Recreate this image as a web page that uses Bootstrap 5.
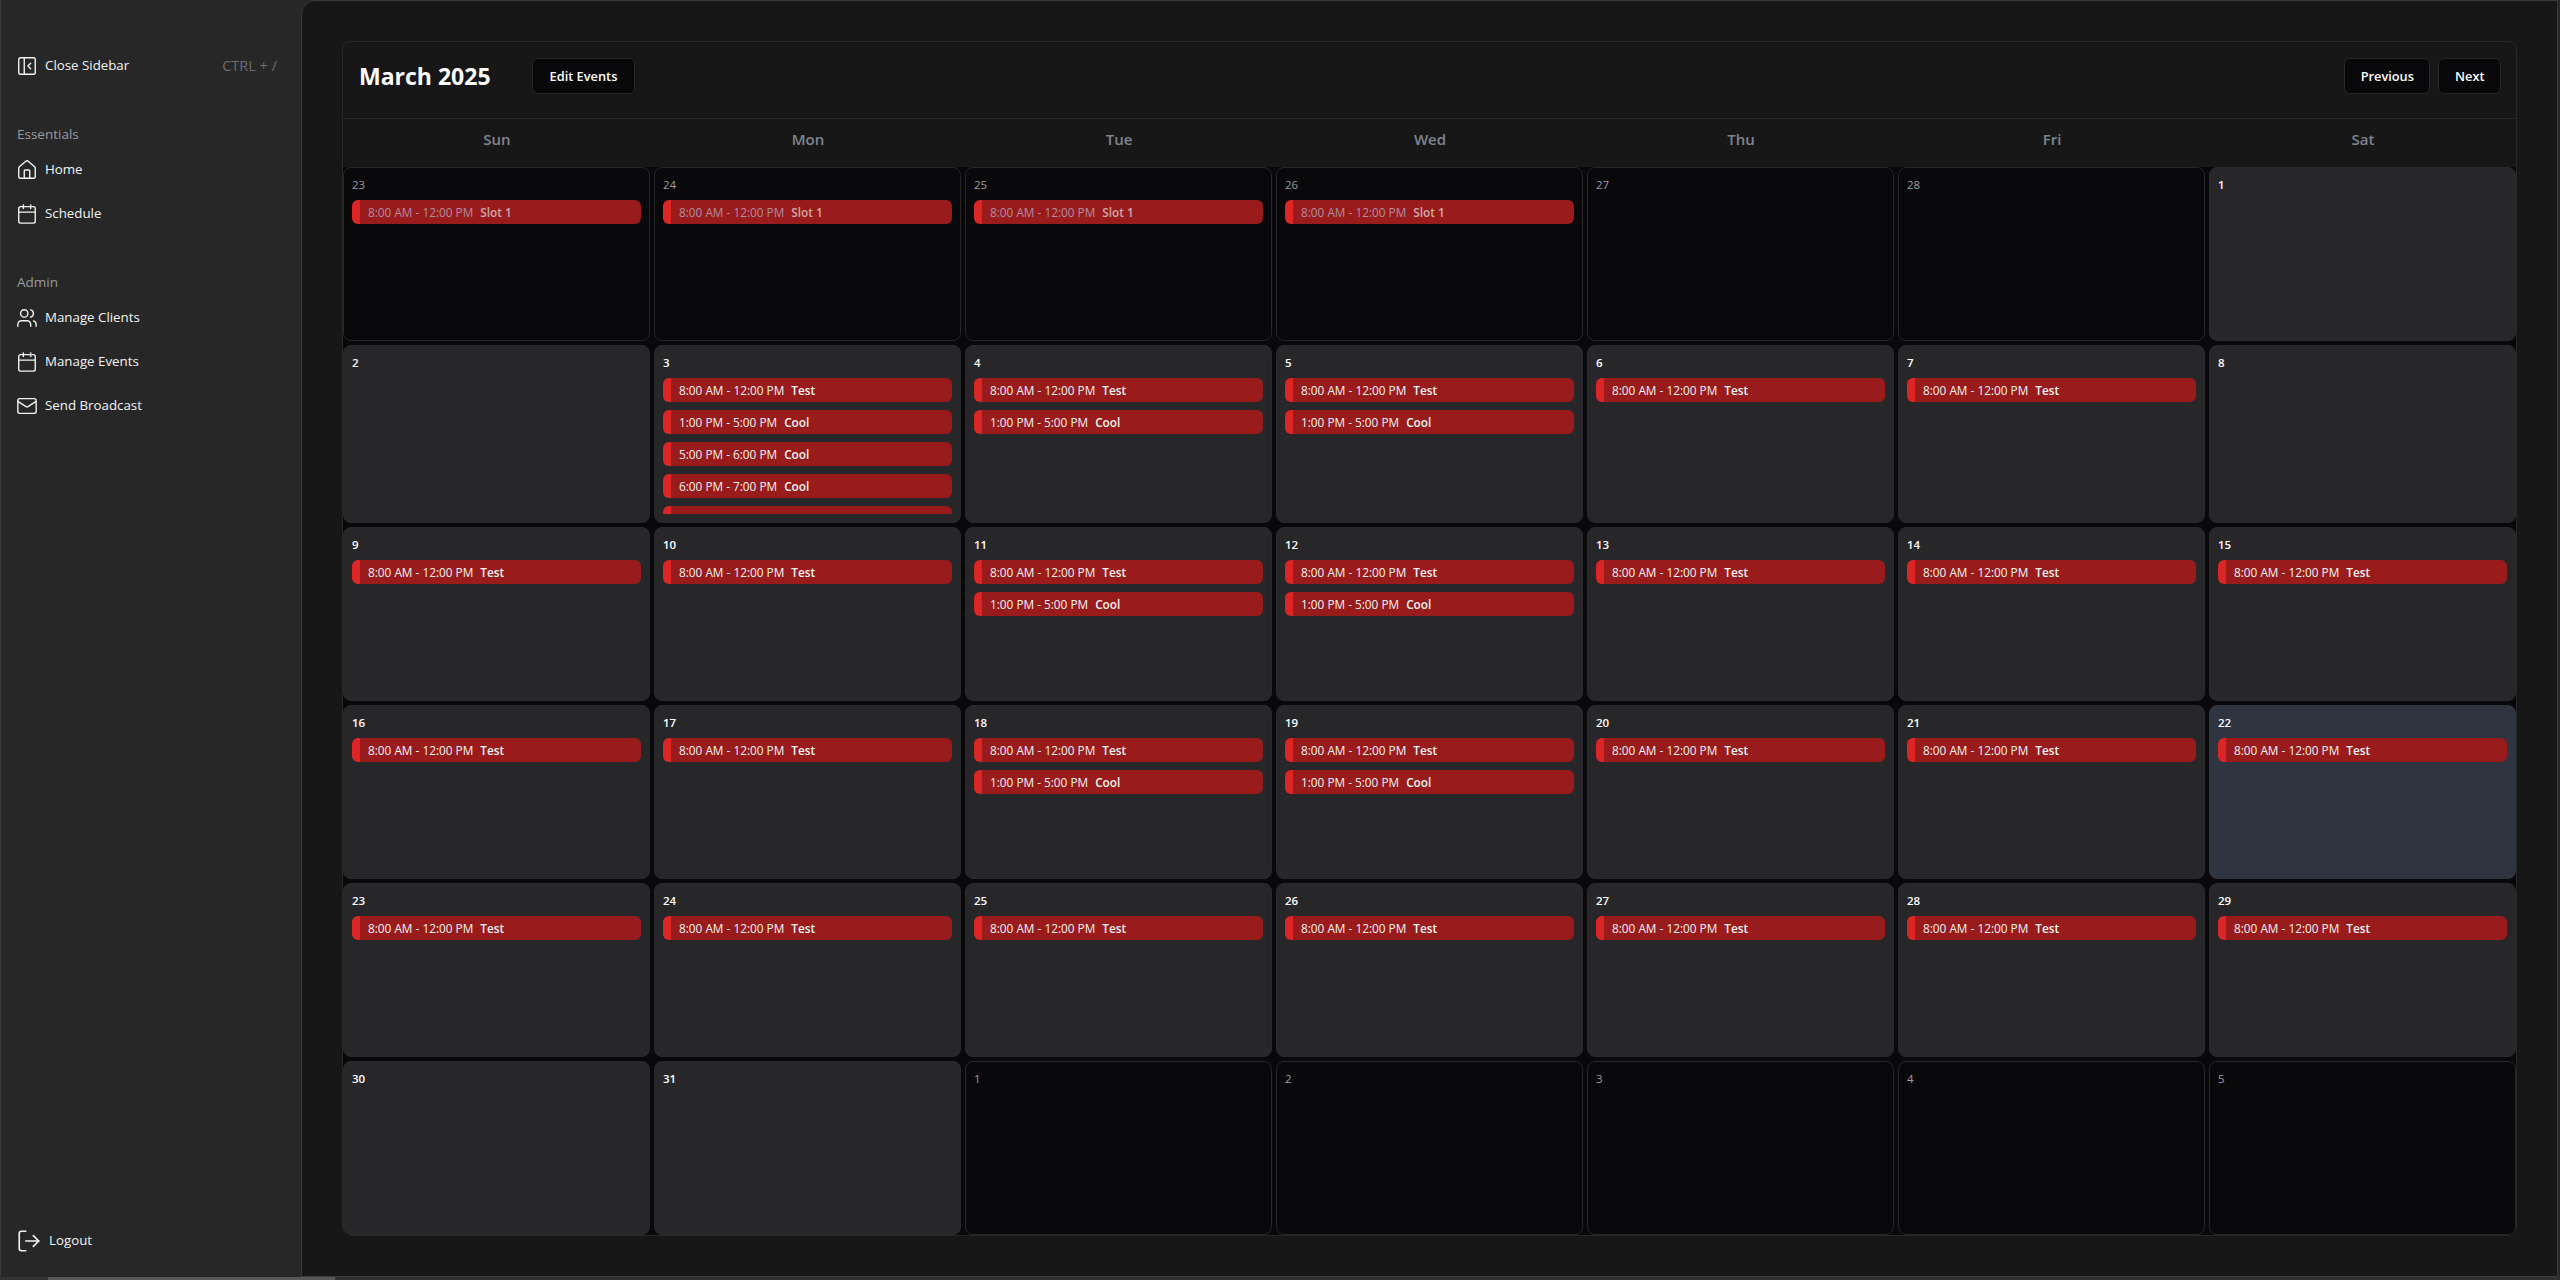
<!DOCTYPE html>
<html lang="en">
<head>
<meta charset="utf-8">
<title>March 2025</title>
<link href="https://cdn.jsdelivr.net/npm/bootstrap@5.3.0/dist/css/bootstrap.min.css" rel="stylesheet">
<style>
html,body{height:100%}
body{background:#101010;font-family:"Open Sans","Noto Sans",sans-serif;color:#fafafa;overflow:hidden}
.app-shell{height:1280px}
.app-row{flex:1;min-height:0;padding-right:2px;background:#272727}
.frame-edge{height:3px;flex:none;background:linear-gradient(90deg,#333 48px,#575757 48px,#575757 335px,#303030 335px)}
.side{width:301px;flex:none;padding:0 16px 14px 16px;background:#272727;border-left:1px solid #3a3a3a}
.side a{color:#f4f4f5;text-decoration:none}
.side-item{height:44px;font-size:13.3px;gap:7px}
.side-item svg{width:22px;height:22px;flex:none;margin-left:-1px;fill:none;stroke:#f4f4f5;stroke-width:1.5;stroke-linecap:round;stroke-linejoin:round}
.side-item.logout svg{width:26px;height:26px;margin-left:-1px}
.side-top{margin-top:44px;margin-bottom:36px}
.shortcut{font-size:14.5px;color:#6c6c75;margin-right:8px}
.side-head{font-size:13.5px;font-weight:500;color:#9a9aa0;height:20px;line-height:20px;margin-bottom:4px}
.side-group{margin-bottom:36px}
.panel{flex:1;min-width:0;background:#171717;border:1px solid #3a3a3a;border-radius:14px 0 0 0;padding:40px}
.cal{height:100%;background:#171717;border:1px solid #27272a;border-radius:8px;overflow:hidden}
.cal-top{padding:16px 15px 24px 16px;height:77px;border-bottom:1px solid #27272a}
.cal-title{font-size:23px;font-weight:700;color:#fff;margin:0 41px 0 0;line-height:36px}
.cal-btn{--bs-btn-bg:#09090b;--bs-btn-border-color:#27272a;--bs-btn-color:#fff;--bs-btn-hover-bg:#09090b;--bs-btn-hover-color:#fff;--bs-btn-hover-border-color:#27272a;--bs-btn-font-size:12.8px;--bs-btn-font-weight:600;--bs-btn-border-radius:6px;--bs-btn-padding-x:17px;height:36px;line-height:1}
.cal-btn.pager{--bs-btn-padding-x:15.5px}
.week-head{display:grid;grid-template-columns:repeat(7,1fr);column-gap:4px;height:48px}
.week-head div{font-size:15px;font-weight:600;color:#80848f;text-align:center;line-height:41px;padding-left:1px}
.days{display:grid;grid-template-columns:repeat(7,1fr);grid-template-rows:174px 178px repeat(4,174px);gap:4px;background:#09090b}
.day{background:#27272a;border:1px solid #2a2a2d;border-radius:8px;padding:8px;overflow:hidden;display:flex;flex-direction:column;min-width:0}
.day.other{background:#09090b;border-color:#27272a}
.day.today{background:#2e3440;border-color:#30343f}
.num{font-size:11.5px;font-weight:600;line-height:17px;height:16px;margin-bottom:8px;color:#fff}
.other .num{font-weight:400;color:#9d9da6}
.evts{display:flex;flex-direction:column;gap:8px;overflow:hidden;flex:1;min-height:0}
.evt{flex:none;height:24px;background:#991b1b;border-left:8px solid #dc2626;border-radius:6px;padding-left:8px;font-size:11.8px;line-height:24px;color:#f5f5f5;white-space:nowrap;overflow:hidden}
.evt b{font-weight:600;margin-left:7px}
.other .evt{color:#b08fa3}
.other .evt b{color:#cfa9a9}
</style>
</head>
<body>
<div class="app-shell d-flex flex-column">
<div class="app-row d-flex">
<aside class="side d-flex flex-column">
  <a href="#" class="side-item side-top d-flex align-items-center"><svg viewBox="0 0 24 24"><rect x="3" y="3" width="18" height="18" rx="2"/><path d="M9 3v18"/><path d="m16 15-3-3 3-3"/></svg><span class="flex-grow-1">Close Sidebar</span><span class="shortcut">CTRL + /</span></a>
  <div class="side-group">
    <div class="side-head">Essentials</div>
    <a href="#" class="side-item d-flex align-items-center"><svg viewBox="0 0 24 24"><path d="M15 21v-8a1 1 0 0 0-1-1h-4a1 1 0 0 0-1 1v8"/><path d="M3 10a2 2 0 0 1 .709-1.528l7-5.999a2 2 0 0 1 2.582 0l7 5.999A2 2 0 0 1 21 10v9a2 2 0 0 1-2 2H5a2 2 0 0 1-2-2z"/></svg><span>Home</span></a>
    <a href="#" class="side-item d-flex align-items-center"><svg viewBox="0 0 24 24"><path d="M8 2v4"/><path d="M16 2v4"/><rect x="3" y="4" width="18" height="18" rx="2"/><path d="M3 10h18"/></svg><span>Schedule</span></a>
  </div>
  <div class="side-group">
    <div class="side-head">Admin</div>
    <a href="#" class="side-item d-flex align-items-center"><svg viewBox="0 0 24 24"><path d="M16 21v-2a4 4 0 0 0-4-4H6a4 4 0 0 0-4 4v2"/><circle cx="9" cy="7" r="4"/><path d="M22 21v-2a4 4 0 0 0-3-3.87"/><path d="M16 3.13a4 4 0 0 1 0 7.75"/></svg><span>Manage Clients</span></a>
    <a href="#" class="side-item d-flex align-items-center"><svg viewBox="0 0 24 24"><path d="M8 2v4"/><path d="M16 2v4"/><rect x="3" y="4" width="18" height="18" rx="2"/><path d="M3 10h18"/></svg><span>Manage Events</span></a>
    <a href="#" class="side-item d-flex align-items-center"><svg viewBox="0 0 24 24"><rect x="2" y="4" width="20" height="16" rx="2"/><path d="m22 7-8.97 5.7a1.94 1.94 0 0 1-2.06 0L2 7"/></svg><span>Send Broadcast</span></a>
  </div>
  <a href="#" class="side-item logout mt-auto d-flex align-items-center"><svg viewBox="0 0 24 24"><path d="M9 21H5a2 2 0 0 1-2-2V5a2 2 0 0 1 2-2h4"/><path d="m16 17 5-5-5-5"/><path d="M21 12H9"/></svg><span>Logout</span></a>
</aside>
<main class="panel">
  <section class="cal">
    <header class="cal-top d-flex align-items-center">
      <h1 class="cal-title">March 2025</h1>
      <button type="button" class="btn cal-btn">Edit Events</button>
      <div class="ms-auto d-flex gap-2">
        <button type="button" class="btn cal-btn pager">Previous</button>
        <button type="button" class="btn cal-btn pager">Next</button>
      </div>
    </header>
    <div class="week-head"><div>Sun</div><div>Mon</div><div>Tue</div><div>Wed</div><div>Thu</div><div>Fri</div><div>Sat</div></div>
    <div class="days">
      <div class="day other"><div class="num">23</div><div class="evts"><div class="evt">8:00 AM - 12:00 PM<b>Slot 1</b></div></div></div>
      <div class="day other"><div class="num">24</div><div class="evts"><div class="evt">8:00 AM - 12:00 PM<b>Slot 1</b></div></div></div>
      <div class="day other"><div class="num">25</div><div class="evts"><div class="evt">8:00 AM - 12:00 PM<b>Slot 1</b></div></div></div>
      <div class="day other"><div class="num">26</div><div class="evts"><div class="evt">8:00 AM - 12:00 PM<b>Slot 1</b></div></div></div>
      <div class="day other"><div class="num">27</div></div>
      <div class="day other"><div class="num">28</div></div>
      <div class="day"><div class="num">1</div></div>

      <div class="day"><div class="num">2</div></div>
      <div class="day"><div class="num">3</div><div class="evts"><div class="evt">8:00 AM - 12:00 PM<b>Test</b></div><div class="evt">1:00 PM - 5:00 PM<b>Cool</b></div><div class="evt">5:00 PM - 6:00 PM<b>Cool</b></div><div class="evt">6:00 PM - 7:00 PM<b>Cool</b></div><div class="evt"></div></div></div>
      <div class="day"><div class="num">4</div><div class="evts"><div class="evt">8:00 AM - 12:00 PM<b>Test</b></div><div class="evt">1:00 PM - 5:00 PM<b>Cool</b></div></div></div>
      <div class="day"><div class="num">5</div><div class="evts"><div class="evt">8:00 AM - 12:00 PM<b>Test</b></div><div class="evt">1:00 PM - 5:00 PM<b>Cool</b></div></div></div>
      <div class="day"><div class="num">6</div><div class="evts"><div class="evt">8:00 AM - 12:00 PM<b>Test</b></div></div></div>
      <div class="day"><div class="num">7</div><div class="evts"><div class="evt">8:00 AM - 12:00 PM<b>Test</b></div></div></div>
      <div class="day"><div class="num">8</div></div>

      <div class="day"><div class="num">9</div><div class="evts"><div class="evt">8:00 AM - 12:00 PM<b>Test</b></div></div></div>
      <div class="day"><div class="num">10</div><div class="evts"><div class="evt">8:00 AM - 12:00 PM<b>Test</b></div></div></div>
      <div class="day"><div class="num">11</div><div class="evts"><div class="evt">8:00 AM - 12:00 PM<b>Test</b></div><div class="evt">1:00 PM - 5:00 PM<b>Cool</b></div></div></div>
      <div class="day"><div class="num">12</div><div class="evts"><div class="evt">8:00 AM - 12:00 PM<b>Test</b></div><div class="evt">1:00 PM - 5:00 PM<b>Cool</b></div></div></div>
      <div class="day"><div class="num">13</div><div class="evts"><div class="evt">8:00 AM - 12:00 PM<b>Test</b></div></div></div>
      <div class="day"><div class="num">14</div><div class="evts"><div class="evt">8:00 AM - 12:00 PM<b>Test</b></div></div></div>
      <div class="day"><div class="num">15</div><div class="evts"><div class="evt">8:00 AM - 12:00 PM<b>Test</b></div></div></div>

      <div class="day"><div class="num">16</div><div class="evts"><div class="evt">8:00 AM - 12:00 PM<b>Test</b></div></div></div>
      <div class="day"><div class="num">17</div><div class="evts"><div class="evt">8:00 AM - 12:00 PM<b>Test</b></div></div></div>
      <div class="day"><div class="num">18</div><div class="evts"><div class="evt">8:00 AM - 12:00 PM<b>Test</b></div><div class="evt">1:00 PM - 5:00 PM<b>Cool</b></div></div></div>
      <div class="day"><div class="num">19</div><div class="evts"><div class="evt">8:00 AM - 12:00 PM<b>Test</b></div><div class="evt">1:00 PM - 5:00 PM<b>Cool</b></div></div></div>
      <div class="day"><div class="num">20</div><div class="evts"><div class="evt">8:00 AM - 12:00 PM<b>Test</b></div></div></div>
      <div class="day"><div class="num">21</div><div class="evts"><div class="evt">8:00 AM - 12:00 PM<b>Test</b></div></div></div>
      <div class="day today"><div class="num">22</div><div class="evts"><div class="evt">8:00 AM - 12:00 PM<b>Test</b></div></div></div>

      <div class="day"><div class="num">23</div><div class="evts"><div class="evt">8:00 AM - 12:00 PM<b>Test</b></div></div></div>
      <div class="day"><div class="num">24</div><div class="evts"><div class="evt">8:00 AM - 12:00 PM<b>Test</b></div></div></div>
      <div class="day"><div class="num">25</div><div class="evts"><div class="evt">8:00 AM - 12:00 PM<b>Test</b></div></div></div>
      <div class="day"><div class="num">26</div><div class="evts"><div class="evt">8:00 AM - 12:00 PM<b>Test</b></div></div></div>
      <div class="day"><div class="num">27</div><div class="evts"><div class="evt">8:00 AM - 12:00 PM<b>Test</b></div></div></div>
      <div class="day"><div class="num">28</div><div class="evts"><div class="evt">8:00 AM - 12:00 PM<b>Test</b></div></div></div>
      <div class="day"><div class="num">29</div><div class="evts"><div class="evt">8:00 AM - 12:00 PM<b>Test</b></div></div></div>

      <div class="day"><div class="num">30</div></div>
      <div class="day"><div class="num">31</div></div>
      <div class="day other"><div class="num">1</div></div>
      <div class="day other"><div class="num">2</div></div>
      <div class="day other"><div class="num">3</div></div>
      <div class="day other"><div class="num">4</div></div>
      <div class="day other"><div class="num">5</div></div>
    </div>
  </section>
</main>
</div>
<div class="frame-edge"></div>
</div>
<script src="https://cdn.jsdelivr.net/npm/bootstrap@5.3.0/dist/js/bootstrap.bundle.min.js"></script>
</body>
</html>
